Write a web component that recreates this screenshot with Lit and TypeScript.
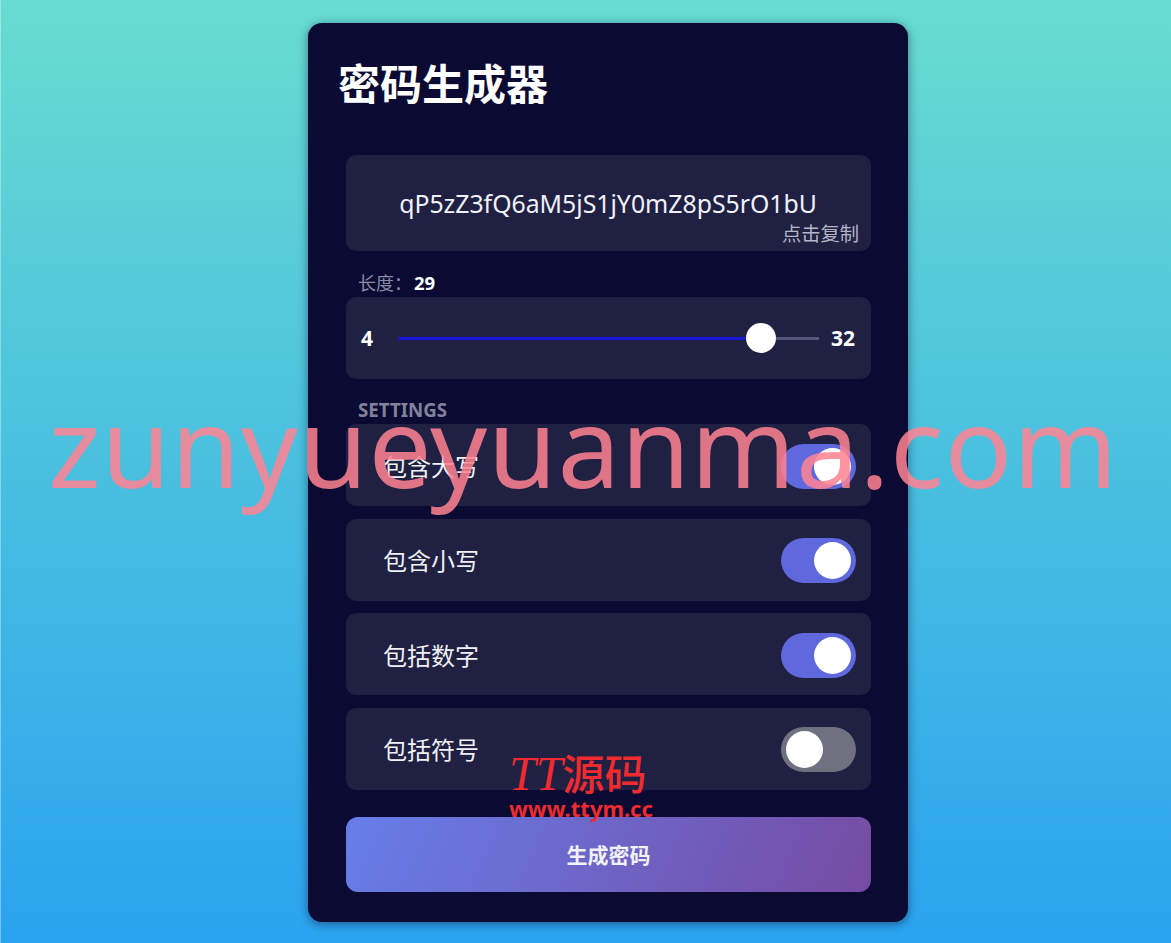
import { LitElement, html, css } from "lit";
import { customElement } from "lit/decorators.js";

const options = [
  { label: "包含大写", on: true },
  { label: "包含小写", on: true },
  { label: "包括数字", on: true },
  { label: "包括符号", on: false },
];

@customElement("app-root")
export class AppRoot extends LitElement {
  static styles = css`
    :host {
      display: block;
      position: relative;
      height: 943px;
      overflow: hidden;
      box-sizing: border-box;
      padding: 23px 0 0 0;
      border-left: 1px solid rgba(255, 255, 255, 0.35);
      background: linear-gradient(180deg, #68dcd0 0%, #2aa3ef 100%);
      font-family: "Noto Sans", "Noto Sans CJK SC", sans-serif;
      color: #fff;
    }
    .card {
      box-sizing: border-box;
      width: 600px;
      height: 899px;
      margin-left: 307px;
      padding: 29px 37px 0 38px;
      background: #0a0a32;
      border-radius: 14px;
      box-shadow: 0 2px 10px rgba(20, 30, 70, 0.55);
      display: flex;
      flex-direction: column;
    }
    h1 {
      margin: 0 0 40px -8px;
      font-size: 42px;
      line-height: 63px;
      font-weight: 700;
    }
    .panel {
      background: #1f2042;
      border-radius: 10px;
    }
    .result {
      height: 96px;
      box-sizing: border-box;
      padding: 30px 12px 0 11px;
      display: flex;
      flex-direction: column;
    }
    .password {
      font-size: 24.8px;
      line-height: 36px;
      text-align: center;
      color: #f1f1fa;
      white-space: nowrap;
    }
    .copy {
      font-size: 19.3px;
      line-height: 26px;
      text-align: right;
      color: #b5b5c5;
    }
    .length {
      margin: 20px 0 0 12px;
      height: 26px;
      font-size: 18px;
      line-height: 24px;
      color: #8b8ca6;
      display: flex;
    }
    .length b {
      color: #fff;
      font-weight: 700;
      font-size: 18.5px;
      margin-left: 2px;
    }
    .slider {
      height: 82px;
      box-sizing: border-box;
      padding: 0 15px;
      display: flex;
      align-items: center;
      font-size: 21px;
      font-weight: 700;
    }
    .min { width: 37px; }
    .max { margin-left: 12px; margin-right: 1px; }
    .track {
      flex: 1;
      display: flex;
      align-items: center;
    }
    .fill { width: 348px; height: 3px; background: #1515d6; }
    .rest { flex: 1; height: 3px; background: #56577a; }
    .thumb {
      width: 30px;
      height: 30px;
      border-radius: 50%;
      background: #fff;
      flex: none;
    }
    .section {
      margin: 19px 0 0 12px;
      height: 26px;
      font-size: 18.7px;
      line-height: 24px;
      font-weight: 700;
      color: #81829b;
    }
    .rows {
      display: flex;
      flex-direction: column;
      gap: 12.5px;
    }
    .row {
      height: 82px;
      box-sizing: border-box;
      padding: 0 15px 0 37px;
      display: flex;
      align-items: center;
      justify-content: space-between;
      font-size: 24px;
      color: #f0f0f5;
    }
    .toggle {
      width: 75px;
      height: 45px;
      margin-top: 2px;
      box-sizing: border-box;
      padding: 4px 5px;
      border-radius: 23px;
      background: #5f68dc;
      display: flex;
      justify-content: flex-end;
    }
    .toggle.off {
      background: #6f7080;
      justify-content: flex-start;
    }
    .toggle i {
      width: 37px;
      height: 37px;
      border-radius: 50%;
      background: #fff;
    }
    button {
      margin-top: 27px;
      height: 75px;
      border: 0;
      border-radius: 12px;
      background: linear-gradient(115deg, #667eea 0%, #764ba2 100%);
      color: #f1f1f8;
      font: 700 21px "Noto Sans", "Noto Sans CJK SC", sans-serif;
    }
    .wm {
      position: absolute;
      left: 47px;
      top: 369px;
      font-size: 112px;
      line-height: 152px;
      letter-spacing: 0.6px;
      color: rgba(255, 130, 145, 0.86);
      white-space: nowrap;
      pointer-events: none;
    }
    .logo {
      position: absolute;
      left: 508px;
      top: 752px;
      color: #ee2b2f;
      pointer-events: none;
      display: flex;
      flex-direction: column;
    }
    .logo .top {
      height: 44px;
      line-height: 44px;
      white-space: nowrap;
      font-weight: 500;
      font-size: 42px;
    }
    .logo .tt {
      font-family: "Liberation Serif", serif;
      font-style: italic;
      font-weight: 400;
      font-size: 48px;
    }
    .logo .url {
      font-size: 22px;
      line-height: 24px;
      font-weight: 700;
      white-space: nowrap;
    }
  `;

  render() {
    return html`
      <main class="card">
        <h1>密码生成器</h1>
        <section class="panel result">
          <div class="password">qP5zZ3fQ6aM5jS1jY0mZ8pS5rO1bU</div>
          <div class="copy">点击复制</div>
        </section>
        <div class="length"><span>长度：</span><b>29</b></div>
        <section class="panel slider">
          <span class="min">4</span>
          <div class="track">
            <div class="fill"></div>
            <div class="thumb"></div>
            <div class="rest"></div>
          </div>
          <span class="max">32</span>
        </section>
        <div class="section">SETTINGS</div>
        <div class="rows">
          ${options.map(
            (o) => html`<div class="panel row">
              <span>${o.label}</span>
              <div class="toggle ${o.on ? "" : "off"}"><i></i></div>
            </div>`
          )}
        </div>
        <button>生成密码</button>
      </main>
      <div class="wm">zunyueyuanma.com</div>
      <div class="logo">
        <span class="top"><span class="tt">TT</span>源码</span>
        <span class="url">www.ttym.cc</span>
      </div>
    `;
  }
}
